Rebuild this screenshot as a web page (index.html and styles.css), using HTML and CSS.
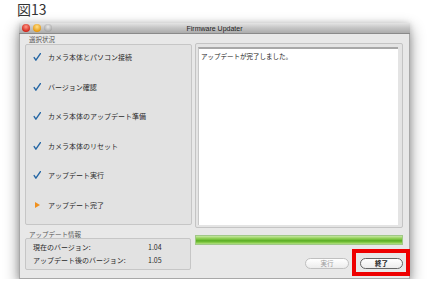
FILE: index.html
```html
<!DOCTYPE html>
<html lang="ja">
<head>
  <meta charset="UTF-8">
  <title>Firmware Updater</title>
  <link rel="stylesheet" href="styles.css">
</head>
<body>
  <h1 class="fig-title">図13</h1>

  <div class="window">
    <div class="titlebar">
      <div class="lights">
        <span class="light red"></span>
        <span class="light orange"></span>
        <span class="light grey"></span>
      </div>
      <div class="title">Firmware Updater</div>
      <div class="lights-spacer"></div>
    </div>

    <div class="content">
      <!-- colonne gauche : etapes + infos -->
      <div class="col-left">
        <div class="group-label">選択状況</div>
        <ul class="steps">
          <li class="step"><svg class="check" width="8" height="8" viewBox="0 0 8 8"><path d="M1.2 4.6 L2.9 7.2 L7.4 0.6"/></svg><span>カメラ本体とパソコン接続</span></li>
          <li class="step"><svg class="check" width="8" height="8" viewBox="0 0 8 8"><path d="M1.2 4.6 L2.9 7.2 L7.4 0.6"/></svg><span>バージョン確認</span></li>
          <li class="step"><svg class="check" width="8" height="8" viewBox="0 0 8 8"><path d="M1.2 4.6 L2.9 7.2 L7.4 0.6"/></svg><span>カメラ本体のアップデート準備</span></li>
          <li class="step"><svg class="check" width="8" height="8" viewBox="0 0 8 8"><path d="M1.2 4.6 L2.9 7.2 L7.4 0.6"/></svg><span>カメラ本体のリセット</span></li>
          <li class="step"><svg class="check" width="8" height="8" viewBox="0 0 8 8"><path d="M1.2 4.6 L2.9 7.2 L7.4 0.6"/></svg><span>アップデート実行</span></li>
          <li class="step current"><svg class="arrow" width="8" height="8" viewBox="0 0 8 8"><polygon points="2,1 7,4 2,7"/></svg><span>アップデート完了</span></li>
        </ul>
        <div class="group-label info-label">アップデート情報</div>
        <div class="info">
          <div class="info-row"><span class="info-key">現在のバージョン:</span><span>1.04</span></div>
          <div class="info-row"><span class="info-key">アップデート後のバージョン:</span><span>1.05</span></div>
        </div>
      </div>

      <!-- colonne droite : log + progression + boutons -->
      <div class="col-right">
        <div class="log-frame">
          <div class="log">アップデートが完了しました。</div>
        </div>
        <div class="progress"></div>
        <div class="buttons">
          <button class="btn" disabled>実行</button>
          <button class="btn btn-quit">終了</button>
        </div>
      </div>
    </div>
  </div>
</body>
</html>
```

FILE: styles.css
```css
body {
  margin: 0;
  background: #fff;
  font-family: "Noto Sans CJK JP", "Liberation Sans", sans-serif;
  color: #2a2a2a;
}
.fig-title {
  margin: 0;
  padding-left: 17px;
  height: 18px;
  line-height: 18px;
  font-size: 14px;
  font-weight: 400;
  color: #333;
}
.window {
  width: 391px;
  margin: 5px 0 0 19px;
  background: #e8e8e8;
  border: 1px solid #a8a8a8;
  border-top: none;
  box-sizing: border-box;
  box-shadow: 0 6px 14px rgba(0,0,0,0.45), 0 0 6px rgba(0,0,0,0.15);
}
.titlebar {
  display: flex;
  align-items: center;
  height: 10px;
  background: linear-gradient(#e4e4e4, #c4c4c4 50%, #acacac);
  border-bottom: 1px solid #8a8a8a;
  margin: 0 -1px;
}
.lights, .lights-spacer {
  display: flex;
  gap: 3px;
  width: 36px;
  padding-left: 3px;
  box-sizing: border-box;
}
.light {
  width: 8px;
  height: 8px;
  border-radius: 50%;
}
.light.red { background: radial-gradient(circle at 50% 35%, #ff9a8a, #d2261a 70%); }
.light.orange { background: radial-gradient(circle at 50% 35%, #ffe08a, #e79a12 70%); }
.light.grey { background: radial-gradient(circle at 50% 35%, #e8e8e8, #a8a8a8 70%); }
.title {
  flex: 1;
  text-align: center;
  font-family: "Liberation Sans", sans-serif;
  font-size: 7px;
  color: #222;
}
.content {
  display: grid;
  grid-template-columns: 167px 208px;
  column-gap: 3px;
  padding: 0 6px 8px 5px;
}
.col-left, .col-right {
  display: flex;
  flex-direction: column;
}
.group-label {
  height: 10px;
  line-height: 10px;
  padding-left: 4px;
  font-size: 6.5px;
  color: #555;
}
.info-label {
  height: 13px;
  line-height: 10px;
  padding-top: 4px;
  box-sizing: border-box;
}
.steps {
  list-style: none;
  margin: 0;
  height: 181px;
  box-sizing: border-box;
  padding: 5px 0 0 7px;
  background: #e2e2e2;
  border: 1px solid #c6c6c6;
  border-radius: 2px;
  display: flex;
  flex-direction: column;
  gap: 15.5px;
}
.step {
  display: flex;
  align-items: center;
  gap: 7px;
  height: 14px;
  font-size: 7px;
}
.check path {
  fill: none;
  stroke: #2466a4;
  stroke-width: 1.4;
  stroke-linecap: round;
  stroke-linejoin: round;
}
.arrow polygon {
  fill: #f0901e;
}
.info {
  height: 32px;
  box-sizing: border-box;
  padding: 2px 0 0 7px;
  background: #e2e2e2;
  border: 1px solid #c6c6c6;
  border-radius: 2px;
  width: 166px;
}
.info-row {
  display: flex;
  height: 13px;
  line-height: 13px;
  font-size: 7px;
}
.info-key {
  width: 115px;
}
.log-frame {
  margin-top: 9px;
  height: 185px;
  box-sizing: border-box;
  padding: 3px 4px 2px 2px;
  background: #e4e4e4;
  border: 1px solid #c4c4c4;
  border-radius: 2px;
  display: flex;
}
.log {
  flex: 1;
  background: #fff;
  border-top: 2px solid #a8a8a8;
  border-left: 1px solid #c8c8c8;
  padding: 2px 2px 0;
  font-size: 6.5px;
  line-height: 10px;
  color: #222;
}
.progress {
  margin-top: 7px;
  height: 10px;
  background: linear-gradient(#c8e8a8, #9ad460 25%, #6cbc34 50%, #58ac22 60%, #8ed050 85%, #b4e088);
  border: 1px solid #a0c888;
  box-sizing: border-box;
}
.buttons {
  display: flex;
  justify-content: flex-end;
  gap: 11px;
  margin-top: 13px;
}
.btn {
  width: 44px;
  height: 11px;
  padding: 0;
  border: 1px solid #aaa;
  border-radius: 6px;
  background: linear-gradient(#fff, #ececec);
  font-family: "Noto Sans CJK JP", sans-serif;
  font-size: 6.5px;
  line-height: 9px;
  color: #222;
}
.btn:disabled {
  color: #999;
  border-color: #c0c0c0;
}
.btn-quit {
  position: relative;
  width: 43px;
  border-color: #666;
  font-weight: 700;
}
/* encadre rouge de l'annotation */
.btn-quit::after {
  content: "";
  position: absolute;
  top: -10px;
  left: -9px;
  right: -8px;
  bottom: -8px;
  border: 4px solid #ee0000;
}
```
